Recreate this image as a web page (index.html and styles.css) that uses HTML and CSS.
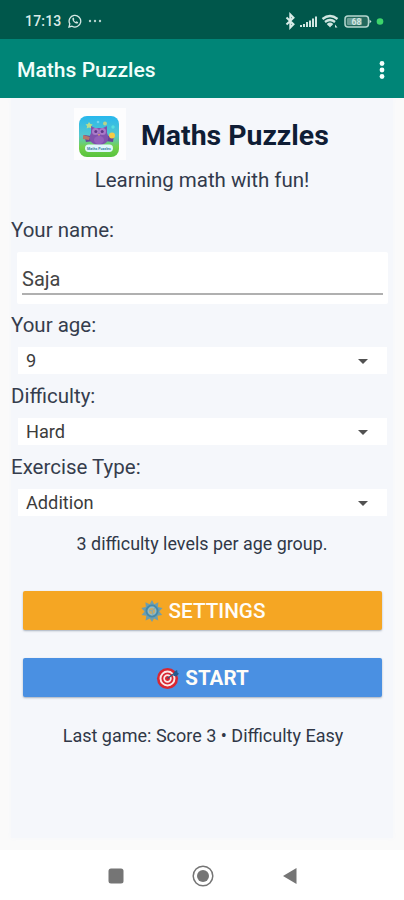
FILE: index.html
```html
<!DOCTYPE html>
<html lang="en">
<head>
<meta charset="utf-8">
<title>Maths Puzzles</title>
<link rel="stylesheet" href="styles.css">
</head>
<body>
<header class="status">
  <span class="clock">17:13</span>
  <svg class="chat" width="14" height="14" viewBox="0 0 14 14"><path d="M1 13l.8-3.1A5.8 5.8 0 1 1 4 12.2z" fill="none" stroke="#d5e8e4" stroke-width="1.3"/><path d="M4.5 4l1-.4.9 1.7-.6.8c.4.9 1 1.500 1.900 1.900l.8-.7 1.700.9-.3 1.100c-2 1.400-6.200-2.200-5.400-5.300z" fill="#d5e8e4"/></svg>
  <svg class="dots" width="14" height="4" viewBox="0 0 14 4" fill="#b5d2cc"><circle cx="2" cy="2" r="1.2"/><circle cx="7" cy="2" r="1.2"/><circle cx="12" cy="2" r="1.2"/></svg>
  <svg class="radios" width="100" height="18" viewBox="0 0 100 18">
    <path d="M2.500 5.500l7 6.800-3.200 3.200v-13l3.200 3.200-7 6.800" fill="none" stroke="#d9ece8" stroke-width="2"/>
    <g fill="#d0e6e1"><rect x="16" y="13" width="2" height="2"/><rect x="19" y="12" width="2" height="3"/><rect x="22" y="10" width="2" height="5"/><rect x="25" y="8.500" width="2" height="6.500"/><rect x="28" y="6.500" width="2" height="8.500"/><rect x="31" y="4.500" width="2" height="10.500"/></g>
    <g fill="none" stroke="#d0e6e1" stroke-width="2.300"><path d="M38.500 7q7.500-6 15 0"/><path d="M41 10q5-4 10 0"/><path d="M43.500 12.800q2.500-2 5 0"/></g>
    <path d="M44 13h4l-2 2.500zM51 12.500l2.500 3h-2.500z" fill="#d0e6e1"/>
    <rect x="61" y="4" width="23.500" height="11" rx="3" fill="#24695d" stroke="#b5d6cf" stroke-width="1.500"/>
    <rect x="63" y="6" width="15" height="7" rx="1" fill="#6b9e95"/>
    <path d="M85.500 7.500l2 2-2 2z" fill="#c5dfd9"/>
    <text x="72.500" y="13" class="charge">68</text>
    <circle cx="96" cy="9.500" r="3.300" fill="#3dd56b"/>
  </svg>
</header>
<div class="appbar">
  <h1>Maths Puzzles</h1>
  <svg width="6" height="20" viewBox="0 0 6 20" fill="#f4fffc"><circle cx="3" cy="3.500" r="2.400"/><circle cx="3" cy="10" r="2.400"/><circle cx="3" cy="16.500" r="2.400"/></svg>
</div>
<main>
  <div class="brand">
    <div class="logo">
      <svg width="40" height="41" viewBox="0 0 40 41">
        <defs><linearGradient id="sky" x2="0" y2="1"><stop offset="0" stop-color="#27b7ed"/><stop offset=".48" stop-color="#55c8cf"/><stop offset=".75" stop-color="#74d04d"/><stop offset="1" stop-color="#58c33c"/></linearGradient></defs>
        <rect width="40" height="41" rx="8" fill="url(#sky)"/>
        <path d="M10 6l1.400 2 2.300.4-1.500 1.700.3 2.400-2.500-1-2.300 1 .4-2.400-1.600-1.700 2.400-.4z" fill="#b9dc8c"/>
        <circle cx="26" cy="7.500" r="2" fill="#b8d28a"/><circle cx="34" cy="11" r="1.700" fill="#59dfe0"/><circle cx="19" cy="6" r="1.300" fill="#74d5ef"/>
        <path d="M5 19l7 1 3 5-8 1zM35 19l-7 1-2 5 8 1z" fill="#674599"/>
        <path d="M4 19l7 2-1 3-6-1z" fill="#b67867"/><circle cx="33" cy="19.500" r="3" fill="#f5cb45"/>
        <path d="M12 10l4 2h8l4-2v7c3 5 1 12-8 12s-11-7-8-12z" fill="#8052ad"/>
        <circle cx="16.500" cy="15.500" r="3.500" fill="#a97ac8"/><circle cx="23.500" cy="15.500" r="3.500" fill="#a97ac8"/>
        <circle cx="16.800" cy="15.500" r="1.500" fill="#60368a"/><circle cx="23.200" cy="15.500" r="1.500" fill="#60368a"/>
        <path d="M18.700 18h2.600l-1.300 2.500z" fill="#cf9a78"/><ellipse cx="20" cy="24" rx="5" ry="4" fill="#9361bb"/>
        <rect x="6" y="28.500" width="28" height="7.500" rx="3.700" fill="#dff7fb"/>
        <text x="20" y="33.700" class="logo-text">Maths Puzzles</text>
      </svg>
    </div>
    <h2>Maths Puzzles</h2>
  </div>
  <p class="tagline">Learning math with fun!</p>
  <div class="label name-label">Your name:</div>
  <div class="field"><div class="line">Saja</div></div>
  <div class="label age-label">Your age:</div>
  <div class="select"><span>9</span><i class="caret"></i></div>
  <div class="label">Difficulty:</div>
  <div class="select"><span>Hard</span><i class="caret"></i></div>
  <div class="label">Exercise Type:</div>
  <div class="select"><span>Addition</span><i class="caret"></i></div>
  <p class="hint">3 difficulty levels per age group.</p>
  <div class="button settings">
    <svg width="24" height="24" viewBox="-12 -12 24 24"><path d="M0-11l2.200 4.200 4.200-2-.5 4.700 4.600 1-3.200 3.500 2.900 3.700-4.700.6.700 4.700-4.200-2L0 11l-2.200-3.600-4.200 2 .7-4.700-4.700-.6 2.900-3.700-3.200-3.500 4.600-1-.5-4.700 4.200 2z" fill="#6f9eac"/><circle r="5.600" fill="none" stroke="#4389ac" stroke-width="1.800"/><circle r="3.700" fill="#c5a967" stroke="#91bac4" stroke-width="1.400"/><path d="M0 0l3-3M0 0l-3-1M0 0l1 4" stroke="#7eabb8"/></svg>
    <span>SETTINGS</span>
  </div>
  <div class="button start">
    <svg width="23" height="23" viewBox="-12 -12 24 24"><circle r="11" fill="#d92732"/><circle r="7.300" fill="none" stroke="#fae9e9" stroke-width="2"/><circle r="3.500" fill="#d92732" stroke="#fae9e9" stroke-width="1.800"/><path d="M0 0l8-6" stroke="#31557b" stroke-width="1.400"/><path d="M6-3l1-4 3-2 .5 3 1.500 1-3 3z" fill="#245a8e"/></svg>
    <span>START</span>
  </div>
  <p class="last">Last game: Score 3 • Difficulty Easy</p>
</main>
<nav>
  <svg width="16" height="16" viewBox="0 0 16 16"><rect x=".5" y=".5" width="15" height="15" rx="2.500" fill="#757575"/></svg>
  <svg width="22" height="22" viewBox="0 0 22 22"><circle cx="11" cy="11" r="9.800" fill="none" stroke="#757575" stroke-width="1.500"/><circle cx="11" cy="11" r="6" fill="#757575"/></svg>
  <svg width="16" height="18" viewBox="0 0 16 18"><path d="M1 9L14.500 1v16z" fill="#757575"/></svg>
</nav>
</body>
</html>
```

FILE: styles.css
```css
* { box-sizing: border-box; }
body { margin: 0; width: 404px; height: 900px; overflow: hidden; display: flex; flex-direction: column; background: #fafafa; font-family: Roboto, sans-serif; color: #303847; white-space: nowrap; }
h1, h2, p { margin: 0; }
svg { display: block; flex: none; }
.status { height: 39px; background: #00574b; display: flex; align-items: center; padding: 2px 20px 0 25px; }
.clock { width: 37px; font-size: 14px; font-weight: 500; letter-spacing: .2px; color: #d9ebe7; }
.chat { margin-left: 6px; }
.dots { margin-left: 6px; }
.radios { margin-left: auto; }
.charge { font-size: 8.500px; font-weight: 700; fill: #d5e8e4; text-anchor: middle; }
.appbar { height: 59px; background: #008577; display: flex; align-items: center; justify-content: space-between; padding: 2px 20px 0 17px; }
.appbar svg { margin-right: -1px; }
h1 { font-size: 21.100px; font-weight: 500; line-height: 30px; color: #f0fffb; padding-top: 1px; }
main { height: 740px; margin: 0 11px; flex: none; display: flex; flex-direction: column; background: #f5f7fb; box-shadow: 0 0 5px #f5f7fb; clip-path: inset(0 -6px -6px); }
.brand { height: 62px; padding: 10px 0 0 63px; display: flex; }
.logo { width: 52px; height: 52px; padding: 8px 0 0 5px; background: #fdfdfe; }
.logo-text { font-size: 3.600px; font-weight: 700; fill: #367ea3; text-anchor: middle; }
h2 { margin-left: 15px; font-size: 28.400px; font-weight: 700; line-height: 56px; color: #0f1d35; }
.tagline { height: 40px; line-height: 40px; font-size: 20.500px; letter-spacing: -.02px; text-align: center; color: #323a4c; }
.label { height: 44px; padding-top: 1px; font-size: 20.500px; line-height: 42px; color: #353d4d; }
.name-label { height: 52px; padding-top: 0; line-height: 60px; }
.age-label { height: 43px; padding-top: 0; }
.field { height: 52px; margin: 0 5px 0 6px; background: #fff; border-radius: 2px; padding: 6px 5px; }
.line { height: 37px; border-bottom: 2px solid #b0b0b0; font-size: 20px; line-height: 42px; color: #454545; }
.select { height: 27px; margin: 0 6px 0 7px; padding: 1px 19px 0 8px; background: #fff; display: flex; align-items: center; justify-content: space-between; font-size: 18.200px; line-height: 26px; color: #3c3c3c; }
.caret { width: 0; height: 0; border: 5px solid transparent; border-top-color: #515151; border-bottom: 0; }
.hint { height: 75px; padding-top: 14px; text-align: center; font-size: 17.900px; line-height: 28px; }
.button { height: 39px; flex: none; margin: 0 11px 0 12px; border-radius: 2px; display: flex; align-items: center; justify-content: center; gap: 6px; font-size: 20.500px; font-weight: 700; color: #fffdf8; box-shadow: 0 1px 2px #596b8380; padding-top: 1px; }
.settings { background: #f5a623; font-size: 20.700px; font-weight: 500; gap: 5px; }
.start { background: #4a90e2; margin-top: 28px; }
.last { margin: 25px 0 0 2px; font-size: 18px; line-height: 28px; text-align: center; }
nav { height: 50px; margin-top: auto; background: #fff; padding: 1px 0 0 1px; display: grid; grid-template-columns: repeat(3, 87px); justify-content: center; justify-items: center; align-items: center; }
```
